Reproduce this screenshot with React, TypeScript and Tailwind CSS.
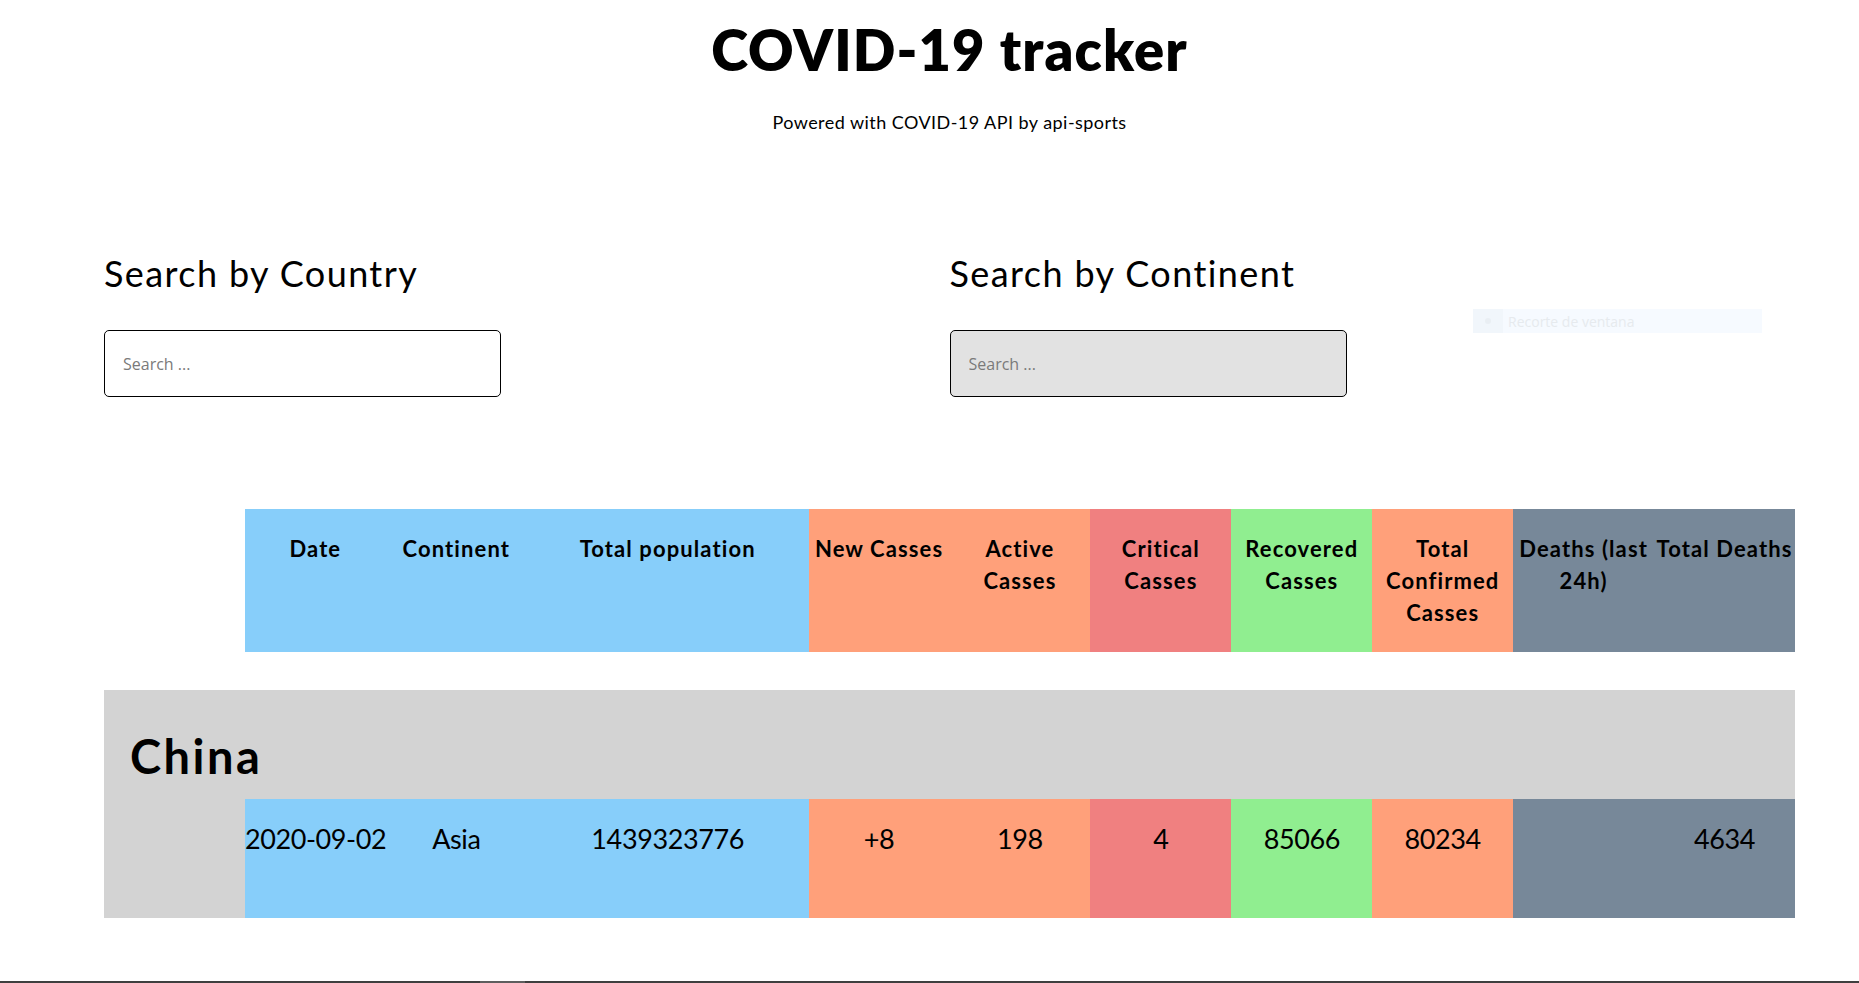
import React from "react";

const FONT = { fontFamily: "Lato, 'Open Sans', 'Noto Sans', sans-serif" };

type Cell = { label: React.ReactNode; bg: string; span?: string };

const headers: Cell[] = [
  { label: "Date", bg: "bg-[#87cefa]" },
  { label: "Continent", bg: "bg-[#87cefa]" },
  { label: "Total population", bg: "bg-[#87cefa]", span: "col-span-2" },
  { label: "New Casses", bg: "bg-[#ffa07a]" },
  { label: <>Active<br />Casses</>, bg: "bg-[#ffa07a]" },
  { label: <>Critical<br />Casses</>, bg: "bg-[#f08080]" },
  { label: <>Recovered<br />Casses</>, bg: "bg-[#90ee90]" },
  { label: <>Total<br />Confirmed<br />Casses</>, bg: "bg-[#ffa07a]" },
  { label: <>Deaths (last<br />24h)</>, bg: "bg-[#778899]" },
  { label: "Total Deaths", bg: "bg-[#778899]" },
];

const values: Cell[] = [
  { label: "2020-09-02", bg: "bg-[#87cefa]" },
  { label: "Asia", bg: "bg-[#87cefa]" },
  { label: "1439323776", bg: "bg-[#87cefa]", span: "col-span-2" },
  { label: "+8", bg: "bg-[#ffa07a]" },
  { label: "198", bg: "bg-[#ffa07a]" },
  { label: "4", bg: "bg-[#f08080]" },
  { label: "85066", bg: "bg-[#90ee90]" },
  { label: "80234", bg: "bg-[#ffa07a]" },
  { label: "", bg: "bg-[#778899]" },
  { label: "4634", bg: "bg-[#778899]" },
];

function SearchBox({ title, filled }: { title: string; filled?: boolean }) {
  return (
    <div className="flex flex-col">
      <h2 className="mt-[124px] text-[36px] leading-[36px] font-normal tracking-[1.4px] text-black">{title}</h2>
      <input
        type="text"
        placeholder="Search ..."
        className={
          "mt-[39px] h-[67px] w-[397px] rounded-[5px] border border-black px-[18px] text-[16px] text-black outline-none placeholder:text-[#7a7a7a] " +
          (filled ? "bg-[#e2e2e2]" : "bg-white")
        }
        style={{ fontFamily: "'Open Sans', 'Noto Sans', sans-serif" }}
      />
    </div>
  );
}

export default function App() {
  return (
    <div className="relative flex h-[983px] flex-col overflow-hidden bg-white text-black" style={FONT}>
      <div className="ml-[104px] w-[1691px]">
        <header className="flex flex-col items-center text-center">
          <h1 className="pt-[22px] text-[56px] leading-[56px] font-extrabold tracking-[1.1px]">COVID-19 tracker</h1>
          <p className="mt-[35px] text-[18px] leading-[18px] tracking-[0.45px]">Powered with COVID-19 API by api-sports</p>
        </header>

        <div className="grid grid-cols-2">
          <SearchBox title="Search by Country" />
          <SearchBox title="Search by Continent" filled />
        </div>

        <div className="mt-[112px] grid grid-cols-12">
          <div />
          {headers.map((h, i) => (
            <div
              key={i}
              className={`${h.bg} ${h.span ?? ""} whitespace-nowrap pt-[24px] pb-[23px] text-center text-[22px] leading-[32px] font-bold tracking-[1.1px]`}
            >
              {h.label}
            </div>
          ))}
        </div>

        <div className="mt-[38px] bg-[#d3d3d3]">
          <h2 className="pt-[43px] pl-[26px] text-[47px] leading-[46px] font-bold tracking-[2.5px]">China</h2>
          <div className="mt-[20px] grid grid-cols-12">
            <div />
            {values.map((v, i) => (
              <div
                key={i}
                className={`${v.bg} ${v.span ?? ""} h-[119px] whitespace-nowrap pt-[26px] text-center text-[27px] leading-[27px] font-normal tracking-[-0.4px]`}
              >
                {v.label}
              </div>
            ))}
          </div>
        </div>
      </div>

      <div className="absolute left-[1473px] top-[309px] flex h-[24px] w-[289px] items-center bg-[#f6faff]">
        <div className="flex h-full w-[30px] items-center justify-center bg-[#f1f6fb]">
          <div className="h-[6px] w-[6px] rounded-full bg-[#e9eef3]" />
        </div>
        <span className="ml-[5px] text-[14px] text-[#e6eaee]" style={{ fontFamily: "'Open Sans', sans-serif" }}>
          Recorte de ventana
        </span>
      </div>

      <div className="mt-auto flex h-[2px] bg-[#3f3f3f]">
        <div className="ml-[480px] h-full w-[45px] bg-[#5e5e5e]" />
      </div>
    </div>
  );
}
